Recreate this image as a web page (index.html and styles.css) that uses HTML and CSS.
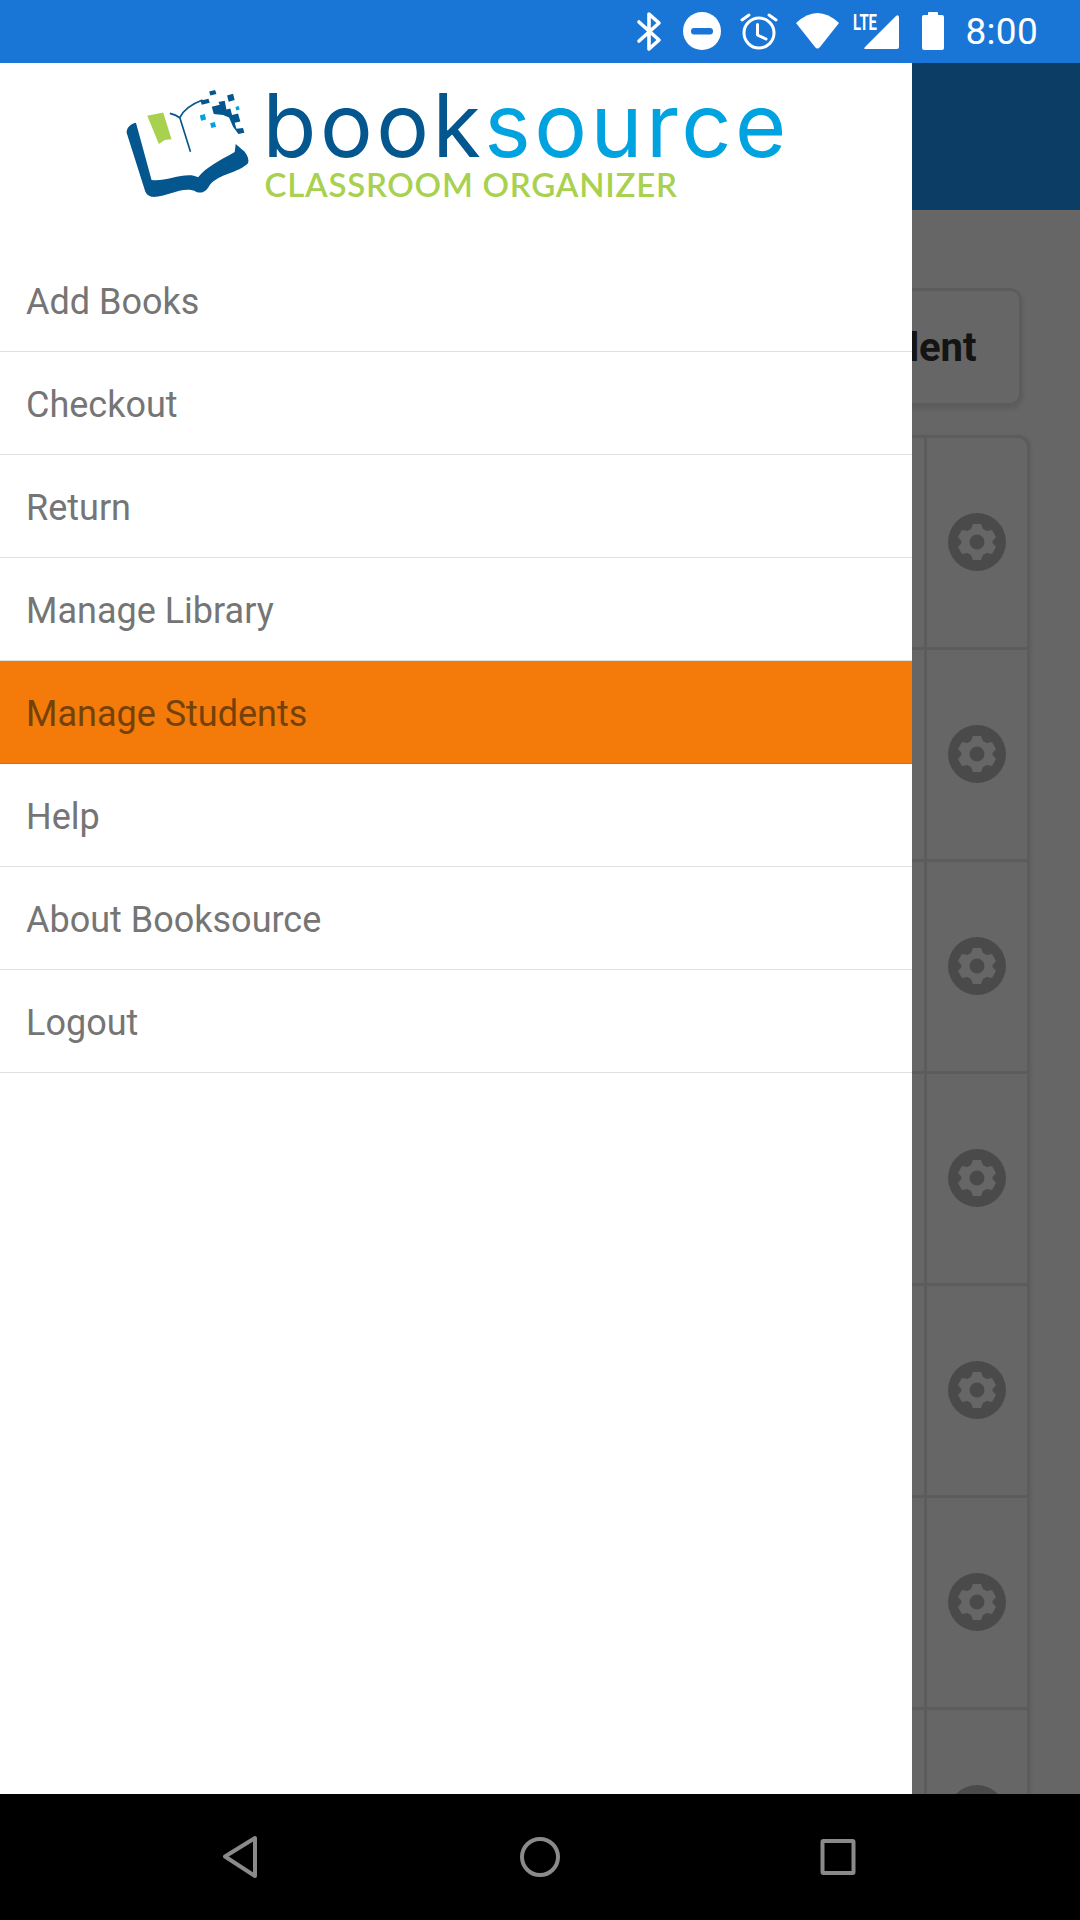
FILE: index.html
```html
<!DOCTYPE html>
<html lang="en">
<head>
<meta charset="utf-8">
<title>Booksource Classroom Organizer</title>
<link rel="stylesheet" href="styles.css">
</head>
<body>
<div class="screen">
  <header class="status">
    <svg class="status-icons" viewBox="630 0 320 63" width="320" height="63" aria-hidden="true">
      <path class="st" d="M640 22 L660 40 L650 49 V14 L660 23 L640 41"/>
      <circle class="wf" cx="703" cy="31" r="19"/>
      <rect class="bl" x="692" y="28" width="22" height="6.5" rx="3"/>
      <circle class="st3" cx="760" cy="33" r="15"/>
      <path class="st3" d="M758.500 24.500 V35 L767 39 M743 20 L750 15 M770 15 L777 20"/>
      <path class="wf" d="M797 23 Q818.500 3 840 23 L821 47 Q818.500 50 816 47 Z"/>
      <path class="wf" d="M866 47 L897 16 Q900 14 900 18 V47 Q900 49 898 49 H867 Q864 49 866 47 Z"/>
      <text class="lte" x="854" y="30" textLength="24" lengthAdjust="spacingAndGlyphs">LTE</text>
      <path class="wf" d="M929 15 V13 Q929 12 930 12 H938 Q939 12 939 13 V15 H943 Q945 15 945 17 V48 Q945 50 943 50 H925 Q923 50 923 48 V17 Q923 15 925 15 Z"/>
    </svg>
    <span class="clock">8:00</span>
  </header>

  <main class="app">
    <div class="appbar"></div>
    <section class="page">
      <div class="add-btn"><span>Add Student</span></div>
      <div class="table">
        <div class="row"><span class="cell-main"></span><span class="cell-gear"><svg class="gear" viewBox="0 0 58 58" width="58" height="58"><use href="#gear"/></svg></span></div>
        <div class="row"><span class="cell-main"></span><span class="cell-gear"><svg class="gear" viewBox="0 0 58 58" width="58" height="58"><use href="#gear"/></svg></span></div>
        <div class="row"><span class="cell-main"></span><span class="cell-gear"><svg class="gear" viewBox="0 0 58 58" width="58" height="58"><use href="#gear"/></svg></span></div>
        <div class="row"><span class="cell-main"></span><span class="cell-gear"><svg class="gear" viewBox="0 0 58 58" width="58" height="58"><use href="#gear"/></svg></span></div>
        <div class="row"><span class="cell-main"></span><span class="cell-gear"><svg class="gear" viewBox="0 0 58 58" width="58" height="58"><use href="#gear"/></svg></span></div>
        <div class="row"><span class="cell-main"></span><span class="cell-gear"><svg class="gear" viewBox="0 0 58 58" width="58" height="58"><use href="#gear"/></svg></span></div>
        <div class="row"><span class="cell-main"></span><span class="cell-gear"><svg class="gear" viewBox="0 0 58 58" width="58" height="58"><use href="#gear"/></svg></span></div>
      </div>
    </section>
    <div class="scrim"></div>

    <nav class="drawer">
      <div class="logo">
        <svg class="logo-mark" viewBox="0 0 430 420" width="143" height="140" aria-hidden="true">
          <path class="dk" d="M50 188 C50 172 62 162 78 158 L83 176 L125 330 C170 336 230 302 265 322 C290 290 330 272 375 246 L378 222 L405 245 Q420 265 415 280 C385 310 330 310 300 345 C290 365 275 372 260 366 C220 345 170 385 125 381 Q112 378 106 365 Z"/>
          <path class="ln" d="M180 130 Q198 134 210 143 L242 245 M210 143 Q225 110 278 90"/>
          <path class="gr" d="M112 137 L160 127 L185 208 L165 210 L147 222 Z"/>
          <path class="dk" d="M298 64 L316 60 L320 72 L302 76 Z M272 92 L296 86 L300 98 L276 104 Z M352 76 L370 71 L375 90 L357 95 Z M306 110 L330 104 L326 96 L345 92 L350 118 L362 115 L367 135 L385 130 L392 154 L375 158 L380 176 L400 174 L404 188 L386 192 L370 170 L358 142 L340 135 L312 132 Z"/>
          <path class="lb" d="M270 136 L285 132 L289 148 L274 152 Z M301 160 L315 156 L319 170 L305 174 Z M377 111 L387 108 L390 118 L380 121 Z"/>
        </svg>
        <div class="logo-text">
          <div class="wordmark"><span class="book">book</span><span class="source">source</span></div>
          <div class="tagline">CLASSROOM ORGANIZER</div>
        </div>
      </div>
      <ul class="menu">
        <li class="item">Add Books</li>
        <li class="item">Checkout</li>
        <li class="item">Return</li>
        <li class="item">Manage Library</li>
        <li class="item active">Manage Students</li>
        <li class="item">Help</li>
        <li class="item">About Booksource</li>
        <li class="item">Logout</li>
      </ul>
    </nav>
  </main>

  <footer class="navbar">
    <svg class="nav-icon" viewBox="0 0 38 44" width="38" height="44" aria-hidden="true"><path d="M33 3 V41 L3 21.500 Z"/></svg>
    <svg class="nav-icon" viewBox="0 0 44 44" width="44" height="44" aria-hidden="true"><circle cx="22" cy="22" r="18"/></svg>
    <svg class="nav-icon" viewBox="0 0 40 40" width="40" height="40" aria-hidden="true"><rect x="4.500" y="6" width="31" height="32" rx="1"/></svg>
  </footer>
</div>

<svg class="defs" width="0" height="0" aria-hidden="true">
  <defs>
    <g id="gear">
      <circle class="gear-disc" cx="29" cy="29" r="29"/>
      <path class="gear-teeth" fill-rule="evenodd" d="M25 11 H33 L35 16 L38.500 18 L44 17 L48 24 L44.500 28 V30 L48 34 L44 41 L38.500 40 L35 42 L33 47 H25 L23 42 L19.500 40 L14 41 L10 34 L13.500 30 V28 L10 24 L14 17 L19.500 18 L23 16 Z M29 21.500 A7.500 7.500 0 1 0 29 36.500 A7.500 7.500 0 1 0 29 21.500 Z"/>
    </g>
  </defs>
</svg>
</body>
</html>
```
FILE: styles.css
```css
* { box-sizing: border-box; }
html, body { margin: 0; padding: 0; }
body { width: 1080px; height: 1920px; overflow: hidden; font-family: Roboto, sans-serif; background: #fff; }
.screen { width: 1080px; height: 1920px; display: flex; flex-direction: column; overflow: hidden; }
.defs { position: absolute; }

/* status bar */
.status { height: 63px; flex: none; background: #1976d6; display: flex; align-items: center; justify-content: flex-end; padding-right: 42px; color: #fff; }
.status-icons { display: block; margin-right: 16px; }
.st { fill: none; stroke: #fff; stroke-width: 3.6; stroke-linecap: round; stroke-linejoin: round; }
.st3 { fill: none; stroke: #fff; stroke-width: 3; stroke-linecap: round; stroke-linejoin: round; }
.wf { fill: #fff; }
.bl { fill: #1976d6; }
.lte { font-family: Roboto, sans-serif; font-weight: 700; font-size: 22px; fill: #fff; }
.clock { font-size: 37px; line-height: 63px; letter-spacing: .3px; }

/* underlying page */
.app { flex: 1; position: relative; overflow: hidden; background: #fff; }
.appbar { height: 147px; background: #1e98fc; }
.page { padding: 78px 50px 0 40px; }
.add-btn { height: 118px; margin-right: 8.500px; border: 3px solid #e6e6e6; border-radius: 12px; display: flex; align-items: center; justify-content: flex-end; padding-right: 42px; box-shadow: 1px 3px 4px rgba(0,0,0,.1); font-weight: 700; font-size: 40px; color: #333; }
.table { margin-top: 29px; border: 3px solid #e6e6e6; border-bottom: 0; border-radius: 12px 12px 0 0; box-shadow: 2px 0 3px rgba(0,0,0,.06); }
.row { height: 212px; display: flex; border-bottom: 3px solid #e6e6e6; }
.cell-main { flex: 1; border-right: 3px solid #e6e6e6; }
.cell-gear { width: 100px; display: flex; align-items: center; justify-content: center; }
.gear { display: block; margin-top: -2px; }
.gear-disc { fill: #b8b8b8; }
.gear-teeth { fill: #fff; }
.scrim { position: absolute; inset: 0; background: rgba(0,0,0,.6); }

/* drawer */
.drawer { position: absolute; top: 0; left: 0; bottom: 0; width: 912px; background: #fff; }
.logo { height: 186px; display: flex; align-items: flex-start; padding: 7px 0 0 110px; }
.logo-mark { flex: none; display: block; }
.logo-text { margin-left: 11.500px; }
.wordmark { font-family: Inter, sans-serif; font-weight: 400; font-size: 88px; line-height: 86px; letter-spacing: 3.500px; margin: 12px 0 0 -2px; white-space: nowrap; }
.book { color: #04568f; }
.source { color: #00a3e0; }
.tagline { font-family: Lato, sans-serif; font-weight: 600; font-size: 33px; line-height: 32px; letter-spacing: .750px; color: #a8d14f; white-space: nowrap; }
.lb { fill: #00a3e0; }
.dk { fill: #04568f; }
.gr { fill: #a8d14f; }
.ln { fill: none; stroke: #04568f; stroke-width: 5; }
.menu { list-style: none; margin: 0; padding: 0; }
.item { height: 103px; display: flex; align-items: center; padding: 3px 0 0 26px; border-bottom: 1.5px solid #e0e0e0; font-size: 36px; color: #757575; }
.item.active { background: #f47b0a; color: #744208; border-bottom-color: #d96c08; }

/* nav bar */
.navbar { height: 126px; flex: none; background: #000; display: grid; grid-template-columns: 296px 300px 40px; padding: 41px 0 0 222px; grid-auto-rows: min-content; }
.nav-icon { display: block; fill: none; stroke: #8a8a8a; stroke-width: 4; stroke-linejoin: round; }
```
